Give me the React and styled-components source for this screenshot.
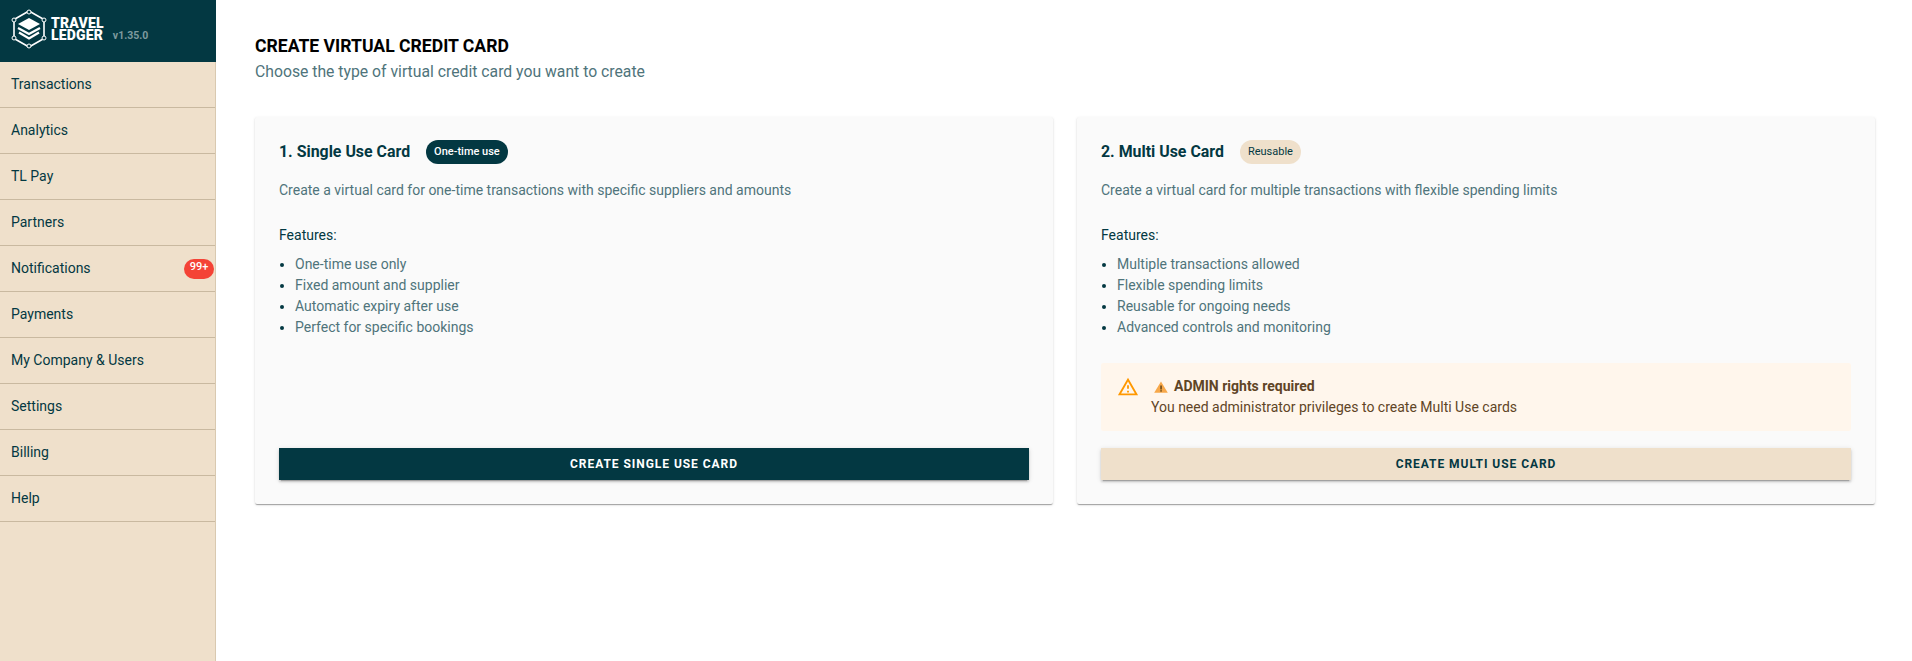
import React from "react";
import styled, { createGlobalStyle } from "styled-components";

const GlobalStyle = createGlobalStyle`
  html, body { margin: 0; padding: 0; background: #fff; }
  body { font-family: Roboto, "Liberation Sans", sans-serif; color: #033842; }
  * { box-sizing: border-box; }
`;

const NAV = [
  "Transactions",
  "Analytics",
  "TL Pay",
  "Partners",
  "Notifications",
  "Payments",
  "My Company & Users",
  "Settings",
  "Billing",
  "Help",
];

const CARDS = [
  {
    title: "1. Single Use Card",
    chip: "One-time use",
    primary: true,
    text: "Create a virtual card for one-time transactions with specific suppliers and amounts",
    features: [
      "One-time use only",
      "Fixed amount and supplier",
      "Automatic expiry after use",
      "Perfect for specific bookings",
    ],
    button: "Create Single Use Card",
  },
  {
    title: "2. Multi Use Card",
    chip: "Reusable",
    text: "Create a virtual card for multiple transactions with flexible spending limits",
    features: [
      "Multiple transactions allowed",
      "Flexible spending limits",
      "Reusable for ongoing needs",
      "Advanced controls and monitoring",
    ],
    warning: true,
    button: "Create Multi Use Card",
  },
];

const Page = styled.div`
  display: flex;
  min-height: 661px;
`;

const Sidebar = styled.aside`
  width: 216px;
  flex-shrink: 0;
  background: #efe0cb;
  border-right: 1px solid #d9c9b0;
`;

const Brand = styled.div`
  height: 62px;
  background: #033842;
  display: flex;
  align-items: center;
  padding: 0 0 4px 10px;
  margin-right: -1px;
`;

const BrandName = styled.div`
  margin-left: 3px;
  font-size: 14px;
  line-height: 12px;
  font-weight: 900;
  letter-spacing: 0.2px;
  color: #fff;
`;

const Version = styled.span`
  margin-left: 9px;
  margin-top: 12px;
  font-size: 10.5px;
  font-weight: 700;
  color: #7d9a9e;
`;

const NavItem = styled.div`
  height: 46px;
  display: flex;
  align-items: center;
  padding: 0 0 2px 11px;
  font-size: 14px;
  color: #033842;
  border-bottom: 1px solid #c9b9a0;
  position: relative;
`;

const Badge = styled.span`
  position: absolute;
  right: 1px;
  top: 13px;
  height: 20px;
  width: 30px;
  border-radius: 10px;
  background: #f44336;
  color: #fff;
  font-size: 11px;
  font-weight: 500;
  line-height: 16px;
  text-align: center;
`;

const Main = styled.main`
  flex: 1;
  padding: 35px 37px 0 39px;
`;

const Title = styled.h1`
  margin: 0;
  font-size: 17.6px;
  line-height: 22px;
  font-weight: 700;
  color: #000;
`;

const Subtitle = styled.p`
  margin: 3px 0 0;
  font-size: 15.75px;
  line-height: 24px;
  color: #4f747b;
`;

const CardGrid = styled.div`
  display: grid;
  grid-template-columns: 1fr 1fr;
  gap: 24px;
  margin-top: 33px;
`;

const Card = styled.section`
  height: 387px;
  padding: 23px 24px 24px;
  background: #fafafa;
  border-radius: 2px;
  box-shadow: 0 2px 1px -1px rgba(0, 0, 0, 0.2), 0 1px 1px 0 rgba(0, 0, 0, 0.14), 0 1px 3px 0 rgba(0, 0, 0, 0.12);
  display: flex;
  flex-direction: column;
`;

const CardHead = styled.div`
  display: flex;
  align-items: center;
  gap: 16px;
  height: 24px;
`;

const CardTitle = styled.h2`
  margin: 0 0 1px;
  font-size: 15.9px;
  font-weight: 700;
  color: #033842;
`;

const Chip = styled.span`
  height: 24px;
  padding: 0 8px;
  border-radius: 12px;
  font-size: 11px;
  line-height: 24px;
  font-weight: ${(p) => (p.$primary ? 500 : 400)};
  color: ${(p) => (p.$primary ? "#fff" : "#033842")};
  background: ${(p) => (p.$primary ? "#033842" : "#efe0cb")};
`;

const CardText = styled.p`
  margin: 16px 0 0;
  font-size: 14px;
  line-height: 20px;
  color: #4f747b;
`;

const FeaturesLabel = styled.div`
  margin-top: 25px;
  font-size: 14px;
  line-height: 20px;
  color: #033842;
`;

const FeatureList = styled.ul`
  margin: 9px 0 0;
  padding: 0 0 0 16px;
  font-size: 14px;
  line-height: 21px;
  color: #4f747b;
  li::marker { color: #033842; }
`;

const Spacer = styled.div`
  flex: 1;
`;

const Warning = styled.div`
  margin-bottom: 17px;
  height: 68px;
  padding: 13px 16px;
  background: #fff6ec;
  display: flex;
  border-radius: 2px;
`;

const WarningBody = styled.div`
  margin-left: 12px;
  font-size: 14px;
  line-height: 21px;
  color: #5f4526;
`;

const WarningTitle = styled.div`
  display: flex;
  align-items: center;
  gap: 6px;
  margin-left: 3px;
  font-weight: 700;
`;

const ActionButton = styled.button`
  display: block;
  width: 100%;
  height: 32px;
  border: 0;
  border-radius: 0;
  font-family: inherit;
  font-size: 12px;
  font-weight: 700;
  letter-spacing: 0.95px;
  text-transform: uppercase;
  color: ${(p) => (p.$primary ? "#fff" : "#033842")};
  background: ${(p) => (p.$primary ? "#033842" : "#efe0cb")};
  box-shadow: 0 3px 1px -2px rgba(0, 0, 0, 0.2), 0 2px 2px 0 rgba(0, 0, 0, 0.14), 0 1px 5px 0 rgba(0, 0, 0, 0.12);
`;

const Logo = () => (
  <svg width="38" height="40" viewBox="0 0 38 40" fill="none">
    <path d="M19 2 L34 10.5 V29.5 L19 38 L4 29.5 V10.5 Z" stroke="#fff" strokeWidth="1.6" />
    {[[19, 3], [34, 11], [34, 29], [19, 37], [4, 29], [4, 11]].map(([x, y]) => (
      <circle key={`${x}-${y}`} cx={x} cy={y} r="2" fill="#033842" stroke="#fff" strokeWidth="1" />
    ))}
    <path d="M19 9 L30 15 L19 21 L8 15 Z" fill="#fff" />
    <path d="M8 19 L19 25 L30 19" stroke="#fff" strokeWidth="2.2" />
    <path d="M9 23.5 L19 29.5 L29 23.5" stroke="#fff" strokeWidth="2.2" />
  </svg>
);

const AlertIcon = () => (
  <svg width="22" height="22" viewBox="0 0 24 24" style={{ flexShrink: 0 }}>
    <path d="M1 21h22L12 2 1 21zm3.47-2L12 5.99 19.53 19H4.47zM11 16h2v2h-2zm0-6h2v4h-2z" fill="#ff9800" />
  </svg>
);

const EmojiWarning = () => (
  <svg width="14" height="12" viewBox="0 0 14 12">
    <path d="M7 0.5 L13.8 11.8 H0.2 Z" fill="#f7a84a" />
    <rect x="6.4" y="4.5" width="1.3" height="4" fill="#4a3410" />
    <rect x="6.4" y="9.2" width="1.3" height="1.4" fill="#4a3410" />
  </svg>
);

export default function App() {
  return (
    <>
      <GlobalStyle />
      <Page>
        <Sidebar>
          <Brand>
            <Logo />
            <BrandName>
              TRAVEL
              <br />
              LEDGER
            </BrandName>
            <Version>v1.35.0</Version>
          </Brand>
          {NAV.map((item) => (
            <NavItem key={item}>
              {item}
              {item === "Notifications" && <Badge>99+</Badge>}
            </NavItem>
          ))}
        </Sidebar>
        <Main>
          <Title>CREATE VIRTUAL CREDIT CARD</Title>
          <Subtitle>Choose the type of virtual credit card you want to create</Subtitle>
          <CardGrid>
            {CARDS.map((card) => (
              <Card key={card.title}>
                <CardHead>
                  <CardTitle>{card.title}</CardTitle>
                  <Chip $primary={card.primary}>{card.chip}</Chip>
                </CardHead>
                <CardText>{card.text}</CardText>
                <FeaturesLabel>Features:</FeaturesLabel>
                <FeatureList>
                  {card.features.map((f) => (
                    <li key={f}>{f}</li>
                  ))}
                </FeatureList>
                <Spacer />
                {card.warning && (
                  <Warning>
                    <AlertIcon />
                    <WarningBody>
                      <WarningTitle>
                        <EmojiWarning />
                        ADMIN rights required
                      </WarningTitle>
                      You need administrator privileges to create Multi Use cards
                    </WarningBody>
                  </Warning>
                )}
                <ActionButton $primary={card.primary}>{card.button}</ActionButton>
              </Card>
            ))}
          </CardGrid>
        </Main>
      </Page>
    </>
  );
}
